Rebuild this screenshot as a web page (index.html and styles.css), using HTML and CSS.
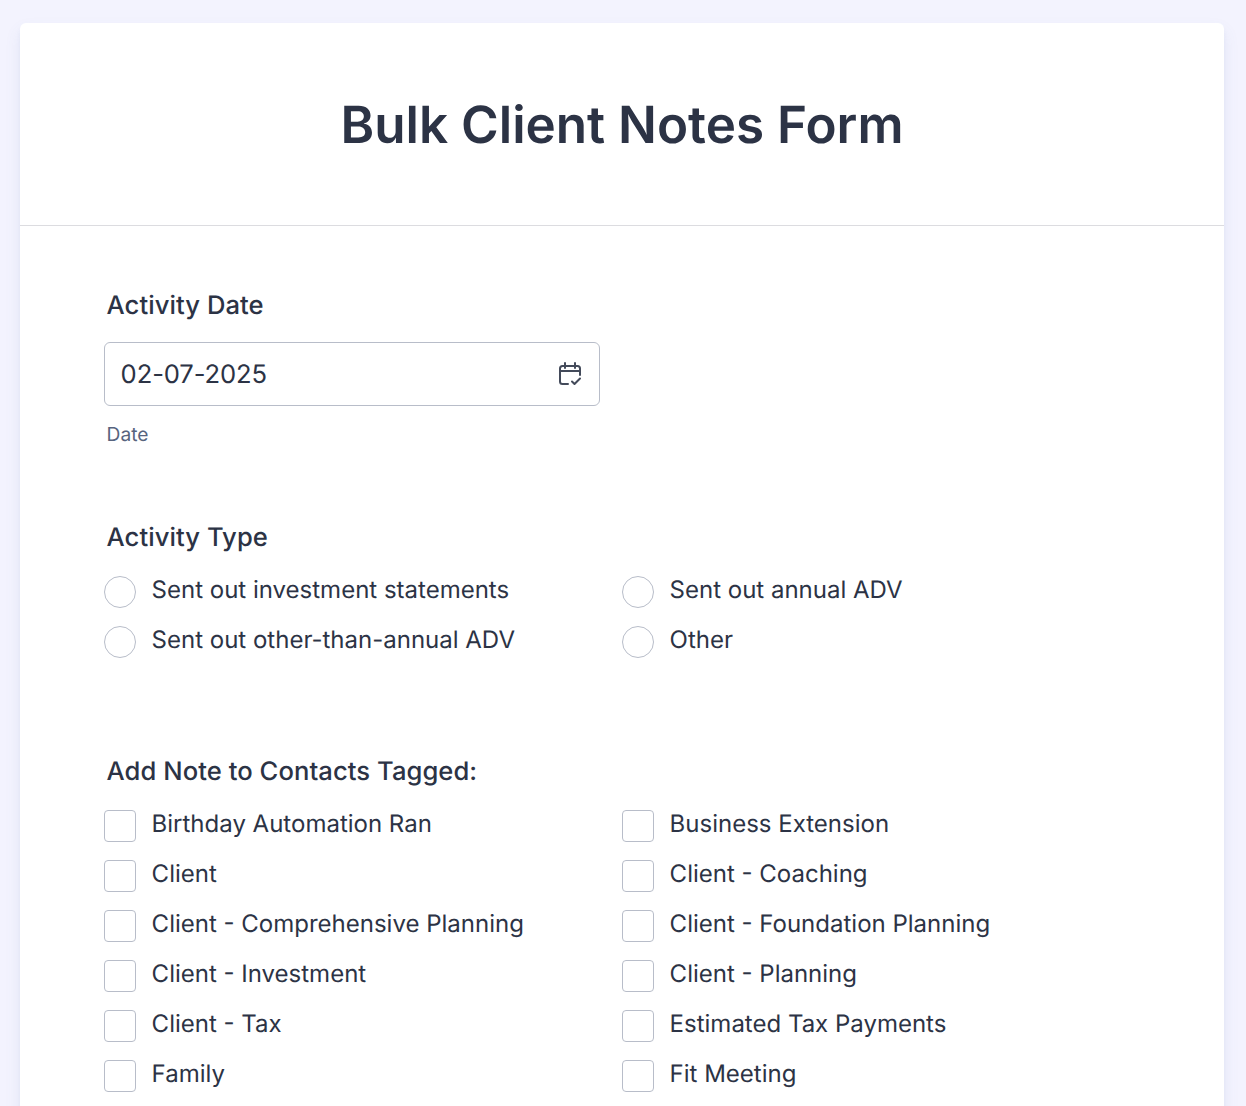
FILE: index.html
```html
<!DOCTYPE html>
<html lang="en">
<head>
  <meta charset="UTF-8">
  <title>Bulk Client Notes Form</title>
  <link rel="stylesheet" href="styles.css">
</head>
<body>

<div class="card">
  <div class="card-header">
    <h1>Bulk Client Notes Form</h1>
  </div>

  <div class="card-body">
    <div class="field field-date">
      <label class="field-label" for="activityDate">Activity Date</label>
      <div class="date-input">
        <input type="text" id="activityDate" value="02-07-2025">
        <svg class="date-icon" width="24" height="24" viewBox="0 0 24 24" fill="none" stroke="#434a5a" stroke-width="2" stroke-linecap="round" stroke-linejoin="round">
          <path d="M10 22H4.5A2.5 2.5 0 0 1 2 19.5V6.5A2.5 2.5 0 0 1 4.5 4h15A2.5 2.5 0 0 1 22 6.5V13"/>
          <path d="M2 9h20"/>
          <path d="M7 1v5"/>
          <path d="M17 1v5"/>
          <path d="M14 19.5l2.5 2.5L22 16.5"/>
        </svg>
      </div>
      <span class="field-hint">Date</span>
    </div>

    <div class="field field-radio">
      <span class="field-label">Activity Type</span>
      <div class="options">
        <label class="option"><span class="radio"></span>Sent out investment statements</label>
        <label class="option"><span class="radio"></span>Sent out annual ADV</label>
        <label class="option"><span class="radio"></span>Sent out other-than-annual ADV</label>
        <label class="option"><span class="radio"></span>Other</label>
      </div>
    </div>

    <div class="field">
      <span class="field-label">Add Note to Contacts Tagged:</span>
      <div class="options">
        <label class="option"><span class="check"></span>Birthday Automation Ran</label>
        <label class="option"><span class="check"></span>Business Extension</label>
        <label class="option"><span class="check"></span>Client</label>
        <label class="option"><span class="check"></span>Client - Coaching</label>
        <label class="option"><span class="check"></span>Client - Comprehensive Planning</label>
        <label class="option"><span class="check"></span>Client - Foundation Planning</label>
        <label class="option"><span class="check"></span>Client - Investment</label>
        <label class="option"><span class="check"></span>Client - Planning</label>
        <label class="option"><span class="check"></span>Client - Tax</label>
        <label class="option"><span class="check"></span>Estimated Tax Payments</label>
        <label class="option"><span class="check"></span>Family</label>
        <label class="option"><span class="check"></span>Fit Meeting</label>
      </div>
    </div>
  </div>
</div>

</body>
</html>
```

FILE: styles.css
```css
html, body {
  height: 100%;
  overflow: hidden;
}

body {
  margin: 0;
  padding: 23px 22px 0 20px;
  box-sizing: border-box;
  background: #f3f3fe;
  font-family: Inter, "Liberation Sans", sans-serif;
  color: #2c3345;
  text-rendering: geometricPrecision;
}

.card {
  background: #fff;
  border-radius: 6px 6px 0 0;
  box-shadow: 0 4px 4px rgba(87, 114, 174, 0.05), 0 8px 16px rgba(87, 114, 174, 0.1);
  min-height: 1200px;
}

.card-header {
  height: 202px;
  display: flex;
  align-items: center;
  justify-content: center;
  border-bottom: 1px solid #dcdce0;
}

h1 {
  margin: 4px 0 0;
  font-size: 51.2px;
  font-weight: 600;
  line-height: 1.2;
}

.card-body {
  padding: 65px 84px 0;
}

.field {
  display: flex;
  flex-direction: column;
  align-items: flex-start;
}

.field-label {
  margin-left: 2.6px;
  font-size: 25.6px;
  font-weight: 500;
  line-height: 30px;
  letter-spacing: 0.06px;
}

.field-date {
  margin-bottom: 78px;
}

.field-radio {
  margin-bottom: 83px;
}

.date-input {
  position: relative;
  width: 496px;
  margin-top: 21px;
}

.date-input input {
  display: block;
  width: 100%;
  height: 64px;
  box-sizing: border-box;
  padding: 0 15.6px;
  border: 1px solid #b8bdc9;
  border-radius: 6px;
  font-family: inherit;
  font-size: 25.6px;
  letter-spacing: -0.1px;
  color: #2c3345;
  text-rendering: geometricPrecision;
}

.date-icon {
  position: absolute;
  top: 20px;
  right: 18px;
}

.field-hint {
  margin: 17px 0 0 2.6px;
  font-size: 19.2px;
  line-height: 22px;
  color: #57647e;
}

.options {
  display: grid;
  grid-template-columns: 518px 1fr;
  width: 100%;
  margin-top: 21px;
}

.option {
  display: flex;
  align-items: flex-start;
  gap: 15.6px;
  height: 50px;
  font-size: 24px;
  line-height: 32px;
}

.radio, .check {
  flex: none;
  width: 32px;
  height: 32px;
  box-sizing: border-box;
  border: 1px solid #b8bdc9;
  background: #fff;
  margin-top: 2px;
}

.radio {
  border-radius: 50%;
}

.check {
  border-radius: 4px;
}
```
